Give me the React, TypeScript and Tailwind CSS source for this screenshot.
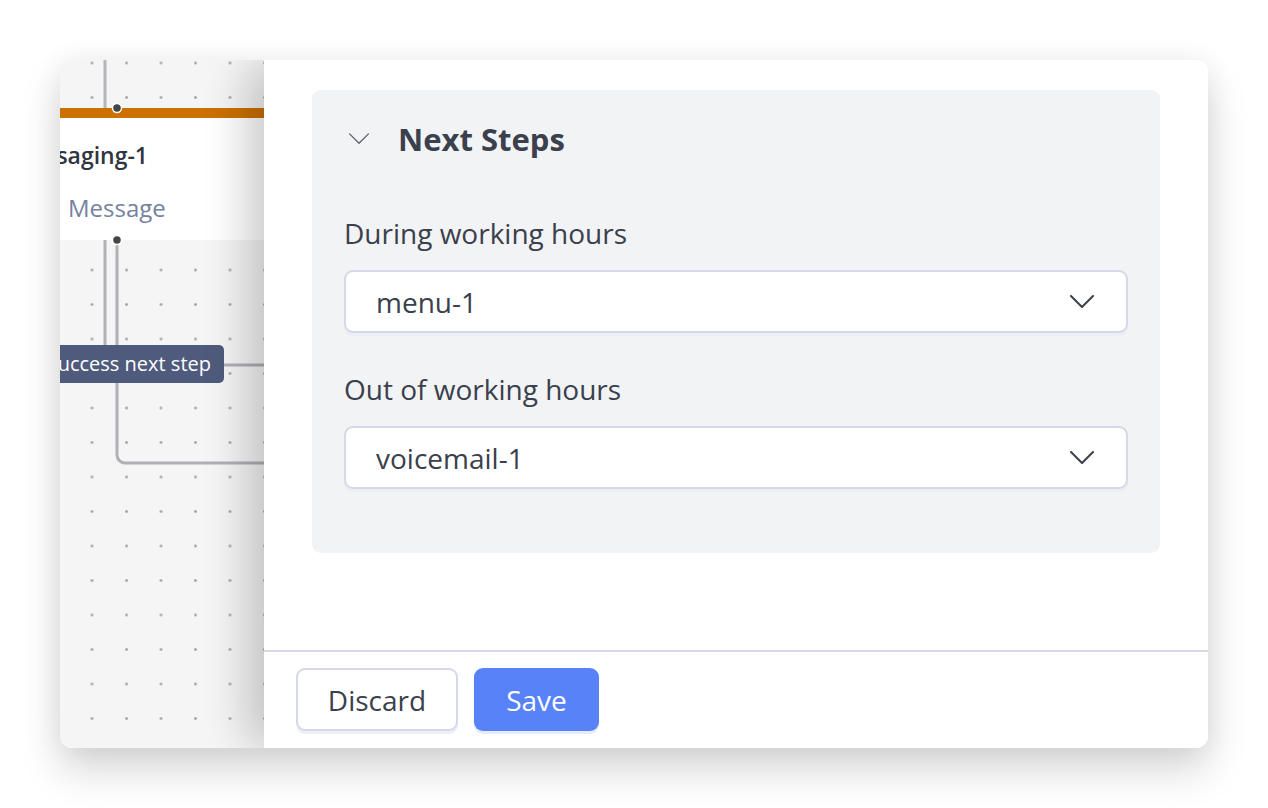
import { useState } from "react"

const font = { fontFamily: '"Open Sans", "Noto Sans", sans-serif' }

function Chevron({ className }: { className?: string }) {
  return (
    <svg viewBox="0 0 24 14" fill="none" className={className}>
      <path d="M1 1l11 11L23 1" stroke="currentColor" strokeWidth="2" strokeLinecap="round" strokeLinejoin="round" />
    </svg>
  )
}

function Canvas() {
  return (
    <div className="relative h-full w-[204px] shrink-0 overflow-hidden bg-[#f5f5f5] bg-[radial-gradient(circle,#a9a9ad_1.1px,transparent_1.6px)] bg-[length:34.5px_34.5px] bg-[position:14.75px_-14.25px]">
      {/* edges */}
      <svg className="absolute inset-0" width="204" height="688" fill="none">
        <path d="M45 0V48" stroke="#b5b5ba" strokeWidth="3" />
        <path d="M45 180V305H204" stroke="#b0b0b5" strokeWidth="3" />
        <path d="M57 180V395a8 8 0 0 0 8 8H204" stroke="#b0b0b5" strokeWidth="3" />
      </svg>

      {/* node */}
      <div className="absolute left-[-60px] top-[48px] w-[300px] bg-white">
        <div className="h-[10px] bg-[#cc7000]" />
        <div className="relative h-[122px]">
          <div className="absolute right-[152px] top-[20px] whitespace-nowrap text-[23px] font-semibold text-[#30363f]">
            Messaging-1
          </div>
          <div className="absolute left-[68px] top-[72px] text-[24px] text-[#7482a0]">Message</div>
        </div>
      </div>

      <svg className="absolute inset-0" width="204" height="688" fill="none">
        <circle cx="57" cy="48" r="4.5" fill="#454545" stroke="#fff" strokeWidth="1.5" />
        <circle cx="57" cy="180" r="4.5" fill="#454545" stroke="#fff" strokeWidth="1.5" />
      </svg>

      {/* edge label */}
      <div className="absolute left-[-80px] top-[285px] flex h-[38px] w-[244px] items-center justify-end whitespace-nowrap rounded-[5px] bg-[#4f5b7c] pr-[13px] text-[20px] text-white">
        Success next step
      </div>
    </div>
  )
}

function Select({ value }: { value: string }) {
  return (
    <button className="flex h-[63px] w-full items-center justify-between rounded-[9px] border-2 border-[#d5d8e8] bg-white pl-[30px] pr-[32px] text-[28px] text-[#3a404c] shadow-[0_3px_0_#eceef3]">
      <span>{value}</span>
      <Chevron className="h-[14px] w-[24px] text-[#3a404c]" />
    </button>
  )
}

export default function App() {
  const [open] = useState(true)

  return (
    <div className="min-h-screen bg-white pt-[60px] pl-[60px]" style={font}>
      <div className="flex h-[688px] w-[1148px] overflow-hidden rounded-[12px] bg-white shadow-[0_22px_40px_rgba(0,0,0,0.16),0_0_30px_rgba(0,0,0,0.06)]">
        <Canvas />

        <div className="relative z-10 flex flex-1 flex-col bg-white shadow-[-22px_0_40px_-4px_rgba(0,0,0,0.2)]">
          <div className="flex-1 px-[48px] pt-[30px]">
            <section className="rounded-[9px] bg-[#f2f3f5] px-[32px] pb-[64px] pt-[29px]">
              <div className="flex h-[40px] items-center gap-[28px] pl-[4px]">
                <Chevron className="h-[12px] w-[22px] text-[#5b6070] [&_path]:[stroke-width:1.5]" />
                <h2 className="text-[31px] font-bold leading-[40px] text-[#3a404c]">Next Steps</h2>
              </div>

              {open && (
                <div className="mt-[55px] flex flex-col">
                  <label className="text-[28px] leading-[38px] text-[#3a404c]">During working hours</label>
                  <div className="mt-[18px]">
                    <Select value="menu-1" />
                  </div>
                  <label className="mt-[37px] text-[28px] leading-[38px] text-[#3a404c]">Out of working hours</label>
                  <div className="mt-[18px]">
                    <Select value="voicemail-1" />
                  </div>
                </div>
              )}
            </section>
          </div>

          <footer className="flex h-[98px] gap-[16px] border-t-2 border-[#d5d8e8] px-[32px] pt-[16px]">
            <button className="h-[63px] w-[162px] rounded-[9px] border-2 border-[#d5d8e8] bg-white text-[28px] text-[#3a404c] shadow-[0_3px_0_#eef0f5]">
              Discard
            </button>
            <button className="h-[63px] w-[125px] rounded-[9px] bg-[#5782f8] text-[28px] text-white shadow-[0_3px_0_#e6ecfb]">
              Save
            </button>
          </footer>
        </div>
      </div>
    </div>
  )
}
